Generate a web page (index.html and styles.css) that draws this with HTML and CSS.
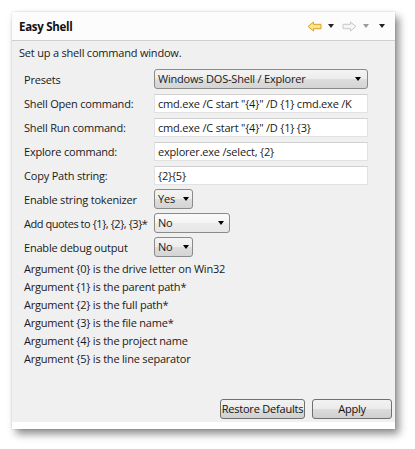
FILE: index.html
```html
<!DOCTYPE html>
<html>
<head>
<meta charset="utf-8">
<link rel="stylesheet" href="styles.css">
</head>
<body>
<div class="panel">
  <div class="header">
    <span class="title">Easy Shell</span>
    <div class="tools">
      <svg class="arrow" width="15" height="11" viewBox="0 0 15 11"><path d="M1 5.5 L6.5 1 L6.5 3.3 L14 3.3 L14 7.7 L6.5 7.7 L6.5 10 Z" fill="#fde58c" stroke="#d6a12c" stroke-width="1" stroke-linejoin="round"/></svg>
      <span class="tri dark"></span>
      <svg class="arrow fwd" width="15" height="11" viewBox="0 0 15 11"><path d="M14 5.5 L8.5 1 L8.5 3.3 L1 3.3 L1 7.7 L8.5 7.7 L8.5 10 Z" fill="#f6f6f6" stroke="#c9c9c9" stroke-width="1" stroke-linejoin="round"/></svg>
      <span class="tri light"></span>
      <span class="tri dark menu"></span>
    </div>
  </div>
  <div class="body">
    <div class="desc">Set up a shell command window.</div>
    <div class="form">
      <div class="label">Presets</div>
      <div class="combo wide"><span class="val">Windows DOS-Shell / Explorer</span><span class="ctri"></span></div>
      <div class="label">Shell Open command:</div>
      <div class="field">cmd.exe /C start "{4}" /D {1} cmd.exe /K</div>
      <div class="label">Shell Run command:</div>
      <div class="field">cmd.exe /C start "{4}" /D {1} {3}</div>
      <div class="label">Explore command:</div>
      <div class="field">explorer.exe /select, {2}</div>
      <div class="label">Copy Path string:</div>
      <div class="field">{2}{5}</div>
      <div class="label">Enable string tokenizer</div>
      <div class="combo small"><span class="val">Yes</span><span class="ctri"></span></div>
      <div class="label tight">Add quotes to {1}, {2}, {3}*</div>
      <div class="combo medium light"><span class="val">No</span><span class="ctri"></span></div>
      <div class="label">Enable debug output</div>
      <div class="combo small"><span class="val">No</span><span class="ctri"></span></div>
    </div>
    <div class="args">
      <div>Argument {0} is the drive letter on Win32</div>
      <div>Argument {1} is the parent path*</div>
      <div>Argument {2} is the full path*</div>
      <div>Argument {3} is the file name*</div>
      <div>Argument {4} is the project name</div>
      <div>Argument {5} is the line separator</div>
    </div>
    <div class="buttons">
      <div class="btn restore">Restore Defaults</div>
      <div class="btn apply">Apply</div>
    </div>
  </div>
</div>
</body>
</html>
```
FILE: styles.css
```css
html, body {
  margin: 0;
  padding: 0;
  background: #ffffff;
}
body {
  font-family: "Open Sans", "Noto Sans", sans-serif;
  font-size: 11px;
  letter-spacing: -0.2px;
  color: #1a1a1a;
  width: 415px;
  height: 449px;
  overflow: hidden;
}
.panel {
  margin: 12px 0 0 12px;
  width: 383px;
  height: 417px;
  box-sizing: border-box;
  display: flex;
  flex-direction: column;
  background: #f0f0f0;
  border-bottom: 7px solid #ffffff;
  box-shadow: 4px 5px 8px rgba(0, 0, 0, 0.45), 0 0 2px rgba(0, 0, 0, 0.15);
}
.header {
  height: 28px;
  flex: none;
  display: flex;
  align-items: center;
  padding: 0 10px 0 7px;
  background: #fcfcfc;
  border-bottom: 1px solid #cfcfcf;
}
.title {
  font-weight: bold;
  font-size: 11.5px;
  letter-spacing: -0.3px;
  color: #111;
}
.tools {
  margin-left: auto;
  display: flex;
  align-items: center;
}
.arrow {
  display: block;
}
.tri {
  width: 0;
  height: 0;
  border-left: 3.5px solid transparent;
  border-right: 3.5px solid transparent;
  border-top: 4px solid #222;
  margin-left: 6px;
}
.tri.light {
  border-top-color: #9a9a9a;
}
.arrow.fwd {
  margin-left: 8px;
}
.tri.menu {
  margin-left: 10px;
}
.body {
  flex: 1;
  display: flex;
  flex-direction: column;
  padding: 0 3px 3px 7px;
}
.desc {
  margin-top: 4px;
  line-height: 16px;
}
.form {
  margin-top: 6px;
  margin-right: 24px;
  padding-left: 5px;
  display: grid;
  grid-template-columns: 130px 1fr;
  grid-auto-rows: 24px;
  align-items: center;
}
.label {
  white-space: nowrap;
}
.label.tight {
  letter-spacing: -0.45px;
}
.field {
  height: 19px;
  box-sizing: border-box;
  background: #ffffff;
  border: 1px solid #e2e2e2;
  border-top-color: #d0d0d0;
  padding-left: 3px;
  line-height: 17px;
  white-space: nowrap;
  overflow: hidden;
}
.combo {
  height: 20px;
  box-sizing: border-box;
  border: 1px solid #8a8a8a;
  border-radius: 3px;
  background: linear-gradient(#f4f4f4, #ececec 50%, #dedede 50%, #d4d4d4);
  display: flex;
  align-items: center;
  padding: 0 6px 0 3px;
  justify-self: start;
}
.combo.wide {
  justify-self: stretch;
}
.combo.small {
  width: 39px;
  padding-right: 3px;
}
.combo.medium {
  width: 76px;
  padding-right: 5px;
}
.combo.light {
  background: linear-gradient(#fafafa, #f4f4f4 50%, #ececec 50%, #e6e6e6);
}
.val {
  flex: 1;
  white-space: nowrap;
  line-height: 18px;
}
.ctri {
  width: 0;
  height: 0;
  border-left: 3.5px solid transparent;
  border-right: 3.5px solid transparent;
  border-top: 4px solid #000;
}
.args {
  margin-top: 1px;
  padding-left: 5px;
  line-height: 18px;
}
.buttons {
  margin-top: auto;
  display: flex;
  justify-content: flex-end;
  gap: 7px;
}
.btn {
  height: 20px;
  box-sizing: border-box;
  border: 1px solid #707070;
  border-radius: 3px;
  background: linear-gradient(#f2f2f2, #ebebeb 50%, #dddddd 50%, #cfcfcf);
  line-height: 18px;
  text-align: center;
  color: #111;
  white-space: nowrap;
}
.btn.restore {
  width: 85px;
}
.btn.apply {
  width: 80px;
}
```
